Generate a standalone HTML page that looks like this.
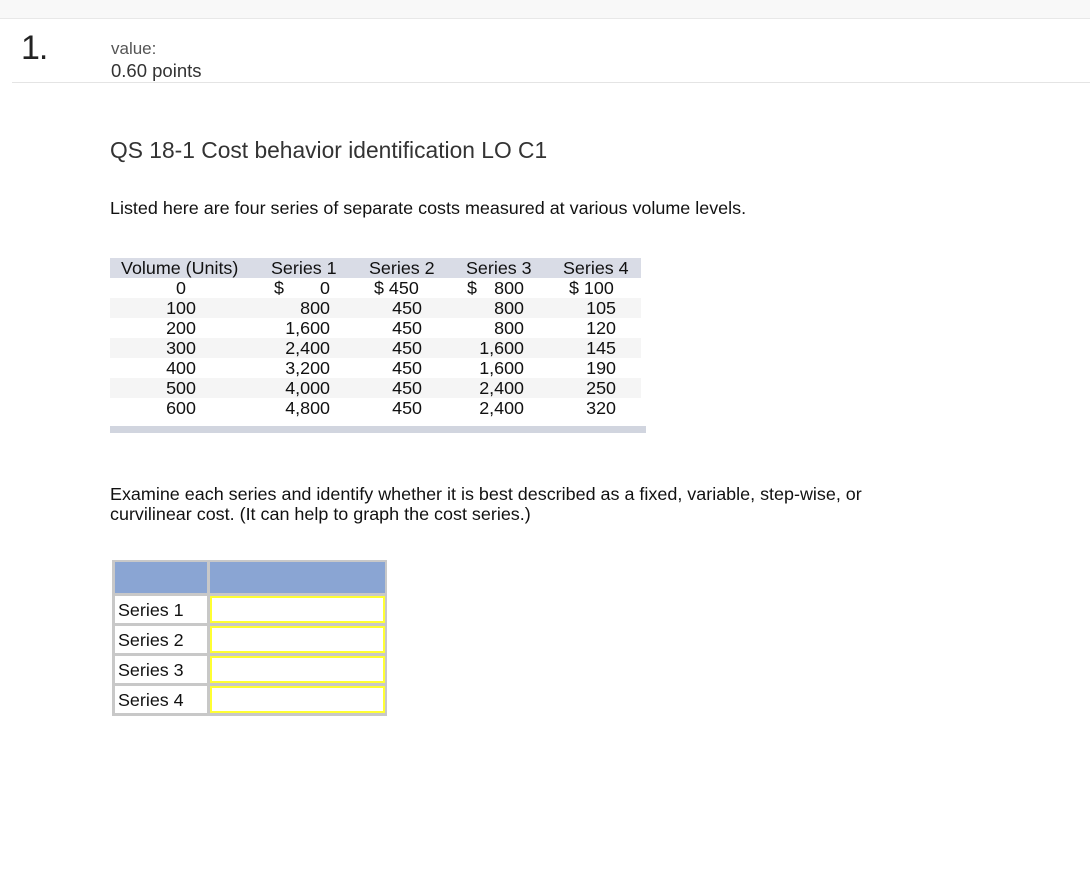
<!DOCTYPE html>
<html><head><meta charset="utf-8"><style>
body{margin:0;width:1090px;height:876px;background:#fff;position:relative;font-family:"Liberation Sans",sans-serif;color:#111;overflow:hidden}
.a{position:absolute;white-space:nowrap}
.r{position:absolute;left:110px;width:531px;height:20px}
.c{position:absolute;top:0;line-height:20px;font-size:17.9px}
.ans{position:absolute;left:112px;width:275px;background:#c8c8c8}
.lab{position:absolute;left:3px;width:92px;height:27px;background:#fff;font-size:17.9px;line-height:28px;padding-left:3px;box-sizing:border-box}
.inp{position:absolute;left:98px;width:175px;height:27px;background:#fff;border:2px solid #ffff33;box-sizing:border-box}
</style></head><body>
<div class="a" style="left:0;top:0;width:1090px;height:18px;background:#f8f8f8;border-bottom:1px solid #e8e8e8"></div>
<div class="a" style="left:21px;top:30px;font-size:34px;line-height:36px;color:#222;letter-spacing:-1px">1.</div>
<div class="a" style="left:111px;top:39px;font-size:17px;color:#555">value:</div>
<div class="a" style="left:111px;top:60px;font-size:18.5px;color:#333">0.60 points</div>
<div class="a" style="left:12px;top:82px;width:1078px;height:1px;background:#e4e4e4"></div>
<div class="a" style="left:110px;top:137px;font-size:22.8px;color:#333">QS 18-1 Cost behavior identification LO C1</div>
<div class="a" style="left:110px;top:198px;font-size:17.95px">Listed here are four series of separate costs measured at various volume levels.</div>

<div class="r" style="top:258px;background:#d9dce6">
<span class="c" style="left:11px">Volume (Units)</span><span class="c" style="left:161px">Series 1</span><span class="c" style="left:259px">Series 2</span><span class="c" style="left:356px">Series 3</span><span class="c" style="left:453px">Series 4</span></div>
<div class="r" style="top:278px"><span class="c" style="left:0;width:142px;text-align:center">0</span><span class="c" style="left:164px">$</span><span class="c" style="left:150px;width:70px;text-align:right">0</span><span class="c" style="left:264px">$ 450</span><span class="c" style="left:357px">$</span><span class="c" style="left:340px;width:74px;text-align:right">800</span><span class="c" style="left:459px">$ 100</span></div>
<div class="r" style="top:298px;background:#f5f5f5"><span class="c" style="left:0;width:142px;text-align:center">100</span><span class="c" style="left:150px;width:70px;text-align:right">800</span><span class="c" style="left:250px;width:62px;text-align:right">450</span><span class="c" style="left:340px;width:74px;text-align:right">800</span><span class="c" style="left:440px;width:66px;text-align:right">105</span></div>
<div class="r" style="top:318px"><span class="c" style="left:0;width:142px;text-align:center">200</span><span class="c" style="left:150px;width:70px;text-align:right">1,600</span><span class="c" style="left:250px;width:62px;text-align:right">450</span><span class="c" style="left:340px;width:74px;text-align:right">800</span><span class="c" style="left:440px;width:66px;text-align:right">120</span></div>
<div class="r" style="top:338px;background:#f5f5f5"><span class="c" style="left:0;width:142px;text-align:center">300</span><span class="c" style="left:150px;width:70px;text-align:right">2,400</span><span class="c" style="left:250px;width:62px;text-align:right">450</span><span class="c" style="left:340px;width:74px;text-align:right">1,600</span><span class="c" style="left:440px;width:66px;text-align:right">145</span></div>
<div class="r" style="top:358px"><span class="c" style="left:0;width:142px;text-align:center">400</span><span class="c" style="left:150px;width:70px;text-align:right">3,200</span><span class="c" style="left:250px;width:62px;text-align:right">450</span><span class="c" style="left:340px;width:74px;text-align:right">1,600</span><span class="c" style="left:440px;width:66px;text-align:right">190</span></div>
<div class="r" style="top:378px;background:#f5f5f5"><span class="c" style="left:0;width:142px;text-align:center">500</span><span class="c" style="left:150px;width:70px;text-align:right">4,000</span><span class="c" style="left:250px;width:62px;text-align:right">450</span><span class="c" style="left:340px;width:74px;text-align:right">2,400</span><span class="c" style="left:440px;width:66px;text-align:right">250</span></div>
<div class="r" style="top:398px"><span class="c" style="left:0;width:142px;text-align:center">600</span><span class="c" style="left:150px;width:70px;text-align:right">4,800</span><span class="c" style="left:250px;width:62px;text-align:right">450</span><span class="c" style="left:340px;width:74px;text-align:right">2,400</span><span class="c" style="left:440px;width:66px;text-align:right">320</span></div>
<div class="a" style="left:110px;top:426px;width:536px;height:7px;background:#d1d5df"></div>

<div class="a" style="left:110px;top:484px;font-size:17.95px;line-height:20px">Examine each series and identify whether it is best described as a fixed, variable, step-wise, or<br>curvilinear cost. (It can help to graph the cost series.)</div>

<div class="ans" style="top:560px;height:156px">
<div class="a" style="left:3px;top:2px;width:92px;height:31px;background:#8aa5d3"></div>
<div class="a" style="left:98px;top:2px;width:175px;height:31px;background:#8aa5d3"></div>
<div class="lab" style="top:36px">Series 1</div><div class="inp" style="top:36px"></div>
<div class="lab" style="top:66px">Series 2</div><div class="inp" style="top:66px"></div>
<div class="lab" style="top:96px">Series 3</div><div class="inp" style="top:96px"></div>
<div class="lab" style="top:126px">Series 4</div><div class="inp" style="top:126px"></div>
</div>
</body></html>
